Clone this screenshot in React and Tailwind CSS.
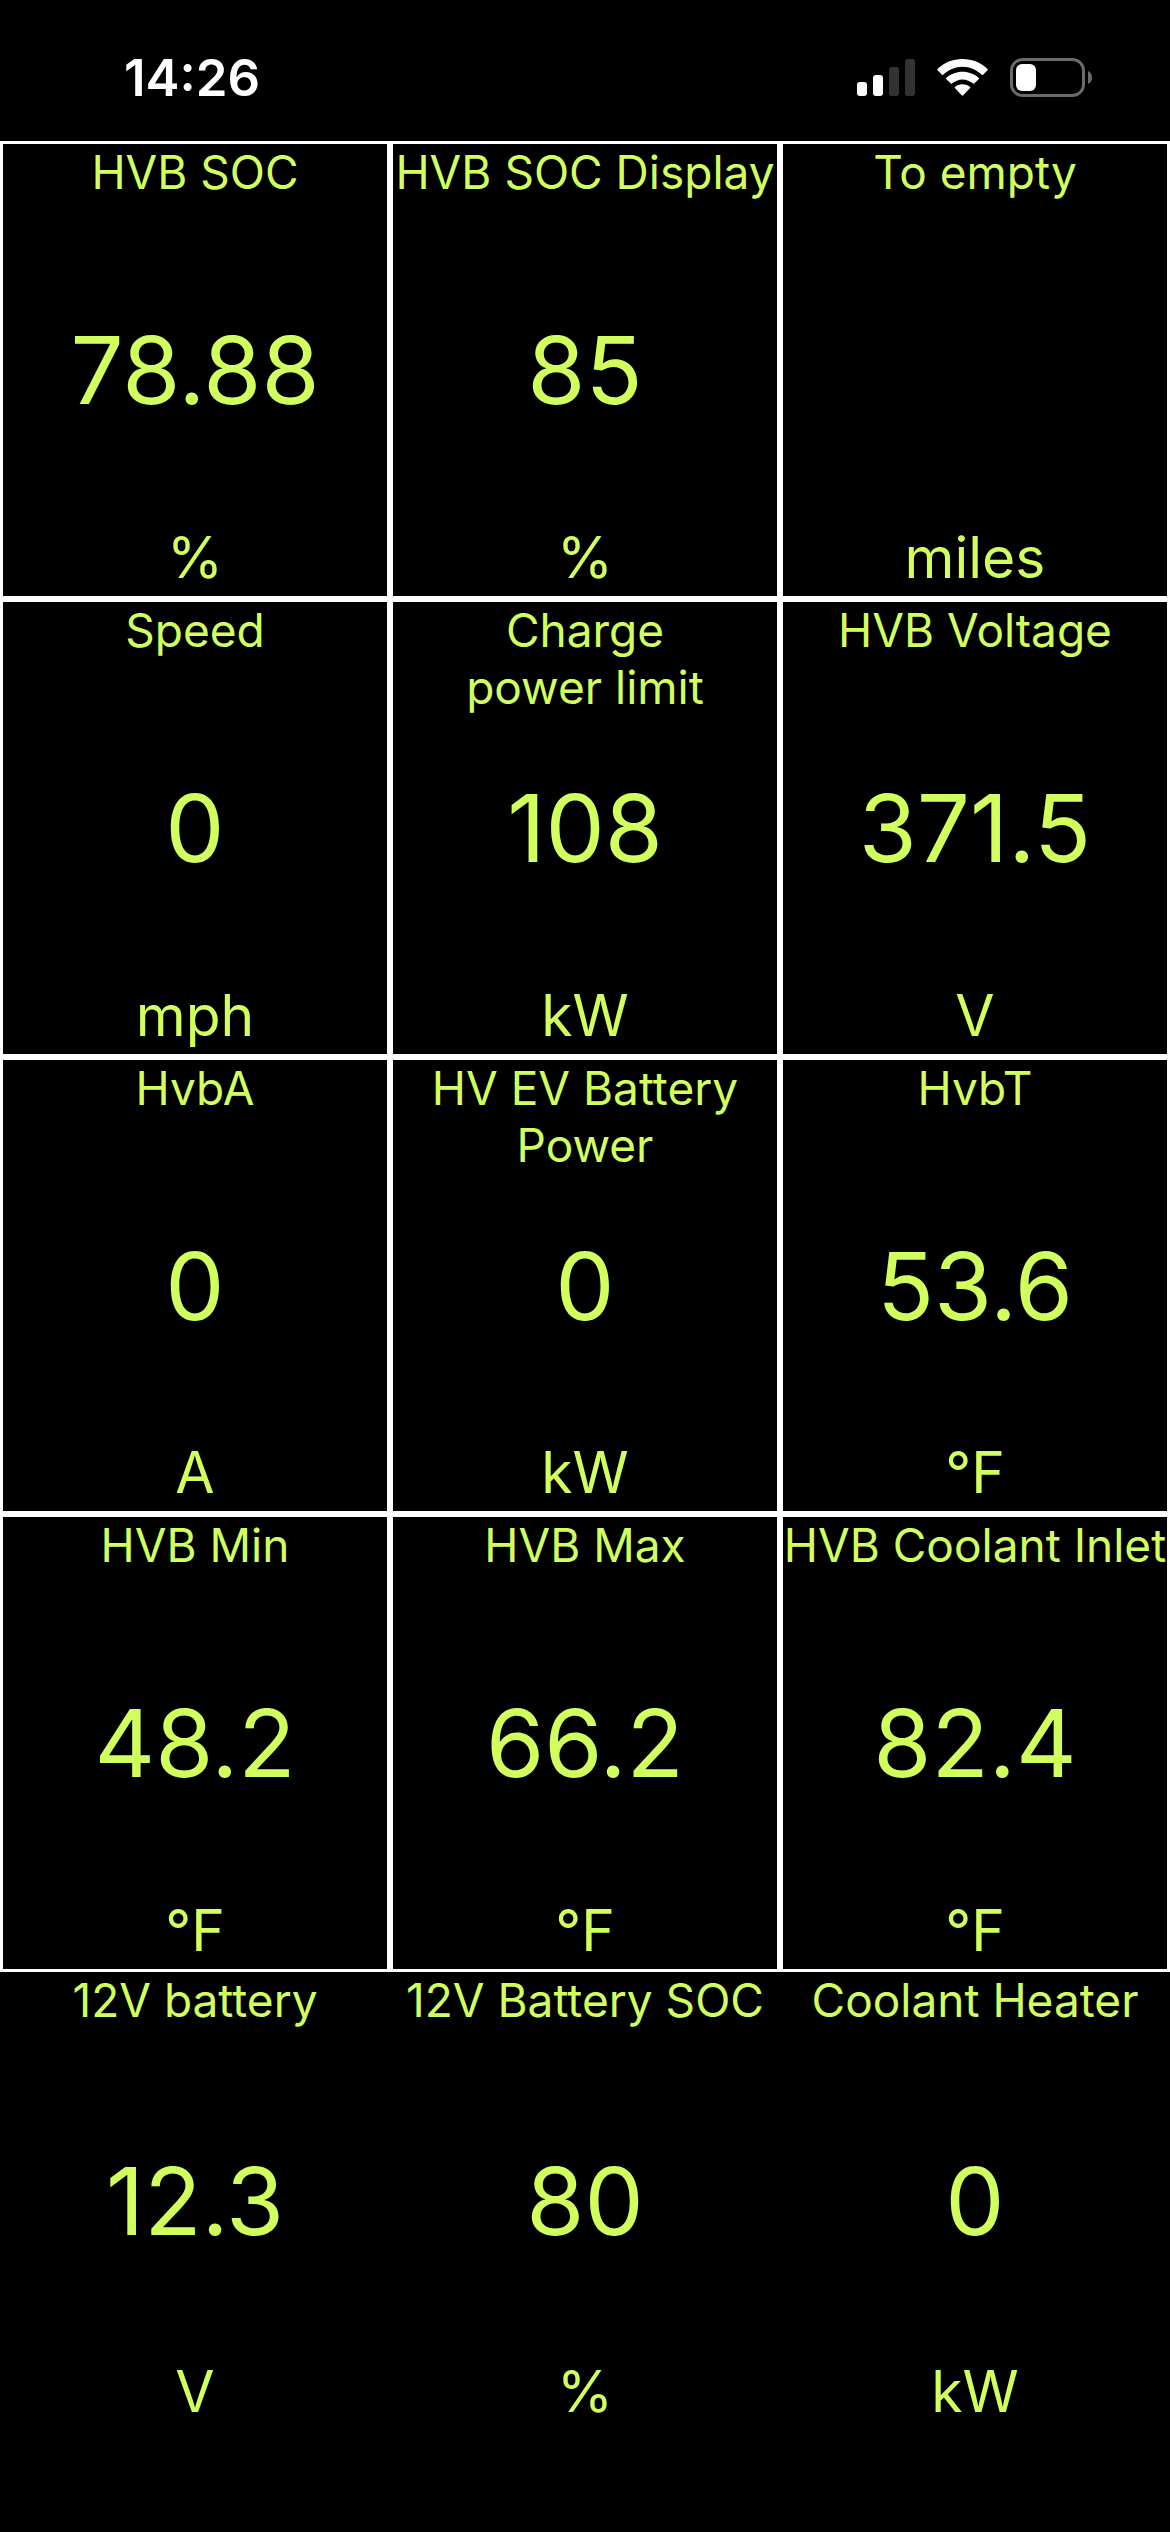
/**
 * App: full screen grid of live EV battery readings.
 */

import React from 'react'

const GAUGES = [
  { label: 'HVB SOC', value: '78.88', unit: '%' },
  { label: 'HVB SOC Display', value: '85', unit: '%' },
  { label: 'To empty', value: '', unit: 'miles' },
  { label: 'Speed', value: '0', unit: 'mph' },
  { label: 'Charge\npower limit', value: '108', unit: 'kW' },
  { label: 'HVB Voltage', value: '371.5', unit: 'V' },
  { label: 'HvbA', value: '0', unit: 'A' },
  { label: 'HV EV Battery\nPower', value: '0', unit: 'kW' },
  { label: 'HvbT', value: '53.6', unit: '°F' },
  { label: 'HVB Min', value: '48.2', unit: '°F' },
  { label: 'HVB Max', value: '66.2', unit: '°F' },
  { label: 'HVB Coolant Inlet', value: '82.4', unit: '°F' },
  { label: '12V battery', value: '12.3', unit: 'V', plain: true },
  { label: '12V Battery SOC', value: '80', unit: '%', plain: true },
  { label: 'Coolant Heater', value: '0', unit: 'kW', plain: true },
]

function SignalIcon() {
  return (
    <svg width="58" height="38" viewBox="0 0 58 38" role="img" aria-label="Signal, 2 of 4 bars">
      <rect x="0" y="23" width="10" height="14" rx="3" fill="#fff" />
      <rect x="16" y="16" width="10" height="21" rx="3" fill="#fff" />
      <rect x="32" y="8" width="10" height="29" rx="3" fill="#333" />
      <rect x="48" y="0" width="10" height="37" rx="3" fill="#333" />
    </svg>
  )
}

function WifiIcon() {
  return (
    <svg width="51" height="38" viewBox="0 0 51 38" fill="#fff" role="img" aria-label="Wi-Fi">
      <path d="M25.5 0C35.2 0 44 3.7 50.5 9.9Q51.1 10.6 50.5 11.2L46 15.7Q45.4 16.2 44.8 15.7C39.6 10.7 32.9 7.7 25.5 7.7S11.4 10.7 6.2 15.7Q5.6 16.2 5 15.7L.5 11.2Q-.1 10.6 .5 9.9C7 3.7 15.8 0 25.5 0Z" />
      <path d="M25.5 12.7C31.7 12.7 37.4 15 41.8 18.9Q42.4 19.5 41.8 20.1L37.3 24.6Q36.7 25.1 36.1 24.6C33.2 22 29.5 20.4 25.5 20.4S17.8 22 14.9 24.6Q14.3 25.1 13.7 24.6L9.2 20.1Q8.6 19.5 9.2 18.9C13.6 15 19.3 12.7 25.5 12.7Z" />
      <path d="M25.5 25.2C28.4 25.2 31 26.2 33.1 27.9Q33.7 28.5 33.1 29.1L26.2 36.3Q25.5 37 24.8 36.3L17.9 29.1Q17.3 28.5 17.9 27.9C20 26.2 22.6 25.2 25.5 25.2Z" />
    </svg>
  )
}

function BatteryIcon() {
  return (
    <svg width="82" height="39" viewBox="0 0 82 39" role="img" aria-label="Battery low">
      <rect x="1.5" y="1.5" width="72" height="36" rx="11" fill="none" stroke="#6b6b6b" strokeWidth="3" />
      <rect x="6" y="6" width="20" height="27" rx="6" fill="#fff" />
      <path d="M78 13C80.5 14 82 16.500 82 19.5S80.5 25 78 26Z" fill="#6b6b6b" />
    </svg>
  )
}

function StatusBar() {
  return (
    <header className="flex h-[141px] shrink-0 items-center justify-between pt-[14px] pr-[78px] pl-[124px] text-white">
      <time className="text-[51px] leading-none font-semibold">14:26</time>
      <div className="flex items-center gap-[22px]">
        <SignalIcon />
        <WifiIcon />
        <BatteryIcon />
      </div>
    </header>
  )
}

function Gauge({ label, value, unit, plain }) {
  return (
    <section className={`flex min-w-0 flex-col items-center text-[#d0ff5e] ${plain ? '' : 'border-3 border-white'}`}>
      <h2 className="flex-1 text-center text-[46px] leading-[57px] whitespace-pre">{label}</h2>
      <p className="h-24 text-[94px] leading-24">{value}</p>
      <div className="flex flex-1 items-end">
        <span className="text-[57px] leading-[76px]">{unit}</span>
      </div>
    </section>
  )
}

export default function App() {
  return (
    <div className="flex min-h-screen flex-col bg-black pb-[102px] font-['Inter','Liberation_Sans',sans-serif]">
      <StatusBar />
      <main className="grid flex-1 grid-cols-3 grid-rows-5">
        {GAUGES.map((g) => (
          <Gauge key={g.label} {...g} />
        ))}
      </main>
    </div>
  )
}
